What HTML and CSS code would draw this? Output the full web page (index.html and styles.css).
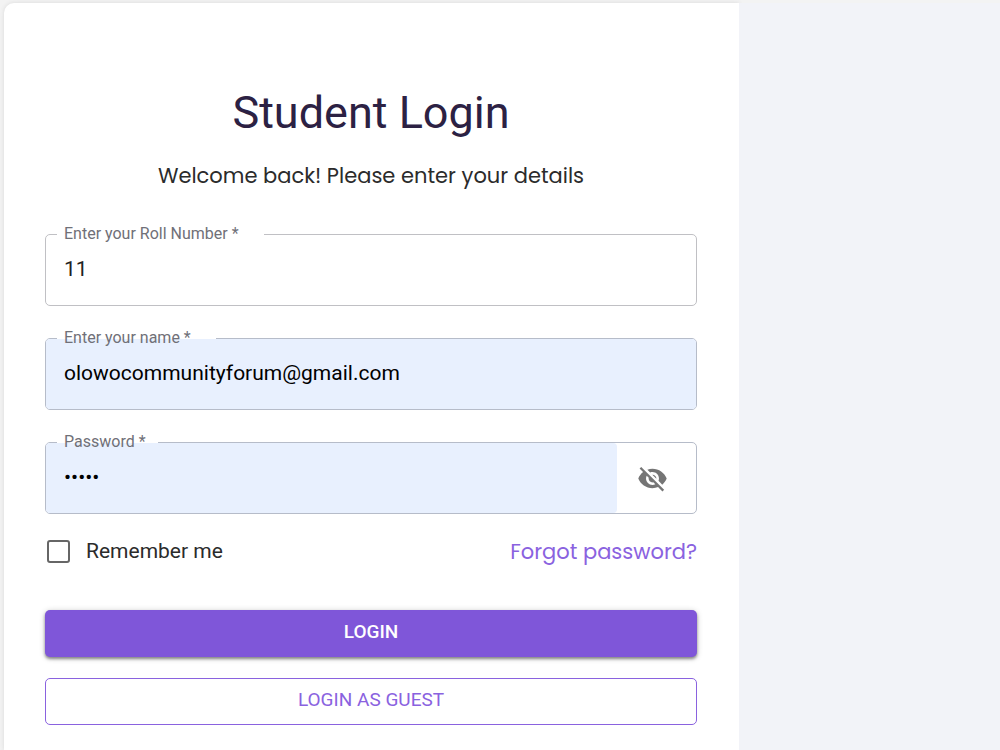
FILE: index.html
```html
<!DOCTYPE html>
<html lang="en">
<head>
<meta charset="utf-8">
<meta name="viewport" content="width=device-width, initial-scale=1">
<title>Student Login</title>
<link rel="stylesheet" href="styles.css">
</head>
<body>
<div class="page">
  <main class="panel">
    <h1 class="title">Student Login</h1>
    <p class="subtitle">Welcome back! Please enter your details</p>
    <form class="form">
      <fieldset class="field">
        <legend class="field-legend legend-long"><label for="roll">Enter your Roll Number *</label></legend>
        <div class="field-body"><input class="field-input" id="roll" type="text" value="11"></div>
      </fieldset>
      <fieldset class="field field-filled">
        <legend class="field-legend legend-long"><label for="name">Enter your name *</label></legend>
        <div class="field-body"><input class="field-input filled" id="name" type="text" value="olowocommunityforum@gmail.com"></div>
      </fieldset>
      <fieldset class="field field-filled">
        <legend class="field-legend"><label for="password">Password *</label></legend>
        <div class="field-body">
          <input class="field-input filled" id="password" type="password" value="12345">
          <button class="reveal" type="button" aria-label="Show password">
            <svg class="reveal-icon" viewBox="0 0 24 24" aria-hidden="true"><path d="M12 7c2.76 0 5 2.24 5 5 0 .65-.13 1.26-.36 1.83l2.92 2.92c1.51-1.26 2.7-2.89 3.43-4.75-1.73-4.39-6-7.5-11-7.5-1.4 0-2.74.25-3.98.7l2.16 2.16C10.74 7.13 11.35 7 12 7zM2 4.27l2.28 2.28.46.46C3.08 8.3 1.78 10.02 1 12c1.73 4.39 6 7.5 11 7.5 1.55 0 3.03-.3 4.38-.84l.42.42L19.73 22 21 20.73 3.27 3 2 4.27zM7.53 9.8l1.55 1.55c-.05.21-.08.43-.08.65 0 1.66 1.34 3 3 3 .22 0 .44-.03.65-.08l1.55 1.55c-.67.33-1.41.53-2.2.53-2.76 0-5-2.24-5-5 0-.79.2-1.53.53-2.2zm4.31-.78l3.15 3.15.02-.16c0-1.66-1.34-3-3-3l-.17.01z"/></svg>
          </button>
        </div>
      </fieldset>
      <div class="options">
        <label class="remember"><input class="checkbox" type="checkbox">Remember me</label>
        <a class="forgot" href="#">Forgot password?</a>
      </div>
      <div class="actions">
        <button class="button primary" type="submit">LOGIN</button>
        <button class="button outlined" type="button">LOGIN AS GUEST</button>
      </div>
    </form>
  </main>
  <aside class="backdrop"></aside>
</div>
</body>
</html>
```
FILE: styles.css
```css
* { box-sizing: border-box; }

body {
  margin: 0;
  background: #f3f3f3;
  color: #2b2b2b;
  font-family: Roboto, sans-serif;
}

.page {
  display: grid;
  grid-template-columns: minmax(0, 735fr) minmax(0, 261fr);
  min-height: 100vh;
  padding: 3px 0 0 4px;
}

.panel {
  padding: 82px 42px 24px 41px;
  border-radius: 10px 0 0 0;
  background: #fff;
  box-shadow: 0 0 4px #d8d8d8;
}

.backdrop {
  position: relative;
  background: #f2f3f8;
}

.title {
  margin: 0;
  color: #2c2143;
  font-size: 45px;
  font-weight: 400;
  line-height: 56px;
  text-align: center;
}

.subtitle {
  margin: 19px 0 32px;
  font-family: Poppins, Inter, sans-serif;
  font-size: 21px;
  line-height: 32px;
  text-align: center;
}

.field {
  min-width: 0;
  margin: 0 0 22px;
  padding: 0 0 0 11px;
  border: 1px solid #c0c0c4;
  border-radius: 5px;
}

.field-filled { border-color: #b6bcc9; }

.field-legend {
  position: relative;
  z-index: 1;
  height: 20px;
  padding: 0 12px 0 7px;
  color: #707078;
  font-size: 16px;
  line-height: 20px;
}

.legend-long { padding-right: 25px; }

.field-body {
  display: flex;
  height: 70px;
  margin: -9px 0 0 -11px;
}

.field-input {
  flex: 1;
  min-width: 0;
  padding: 0 18px 2px;
  border: 0;
  border-radius: 4px;
  outline: 0;
  background: none;
  color: #222;
  font: 21px/28px Roboto, sans-serif;
}

.filled {
  background: #e8f0fe;
  color: #000;
}

.reveal {
  display: flex;
  align-items: center;
  justify-content: center;
  width: 79px;
  padding: 0 8px 0 0;
  border: 0;
  background: none;
}

.reveal-icon {
  width: 31px;
  height: 31px;
  fill: #757575;
}

.options {
  display: flex;
  align-items: center;
  justify-content: space-between;
  height: 30px;
  font-size: 21px;
}

.remember {
  display: flex;
  align-items: center;
  gap: 16px;
}

.checkbox {
  width: 23px;
  height: 23px;
  margin: 0 0 0 2px;
  border: 2px solid #666;
  border-radius: 3px;
  appearance: none;
}

.checkbox:checked { background: #7f56d9; }

.forgot {
  color: #8a62df;
  font-family: Poppins, Inter, sans-serif;
  font-size: 21px;
  text-decoration: none;
}

.actions {
  display: flex;
  flex-direction: column;
  gap: 21px;
  margin-top: 44px;
}

.button {
  height: 47px;
  padding: 0 20px 3px;
  border: 0;
  border-radius: 5px;
  font: 500 19px/24px Roboto, sans-serif;
}

.primary {
  background: #7f56d9;
  box-shadow: 0 2px 3px #0006, 0 1px 6px #0003;
  color: #fff;
}

.outlined {
  border: 1px solid #8a62df;
  background: #fff;
  color: #8a62df;
  font-weight: 400;
}
```
